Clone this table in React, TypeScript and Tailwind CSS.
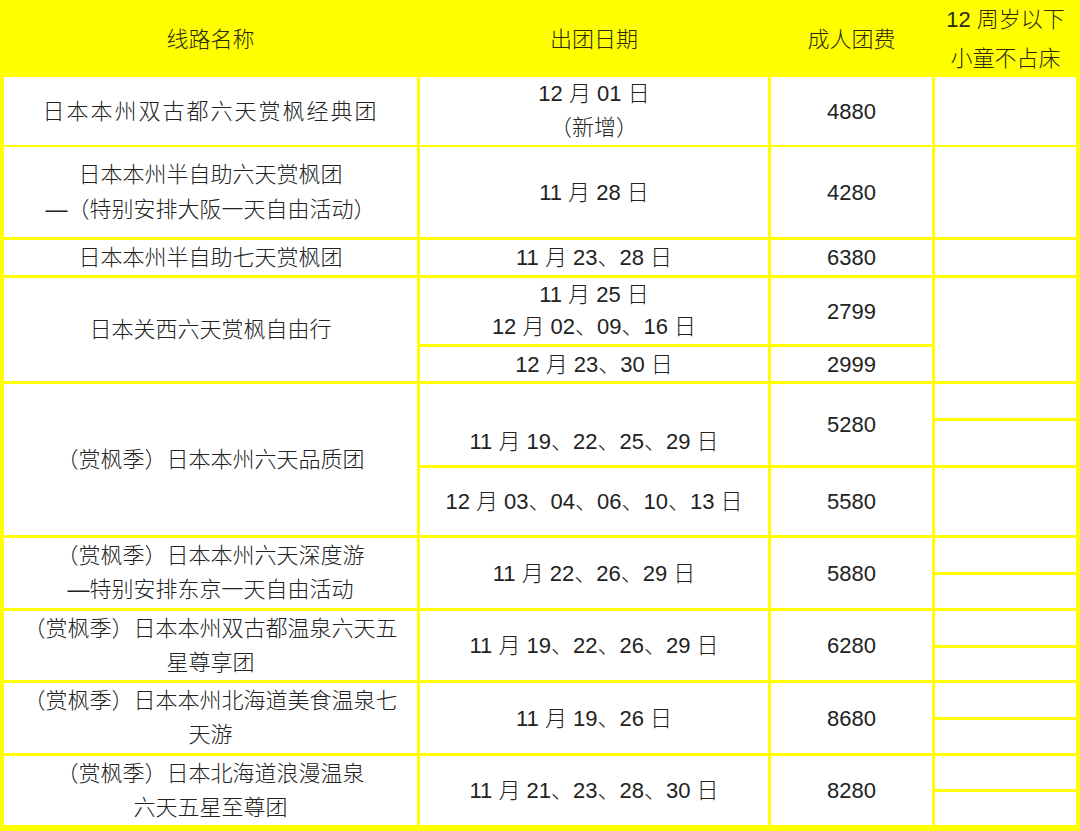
const COLS = 'grid grid-cols-[413px_348px_161px_141px] gap-[3px]'

function Cell({ className = '', children }: { className?: string; children?: React.ReactNode }) {
  return (
    <div className={`bg-white flex flex-col items-center justify-center text-center whitespace-nowrap ${className}`}>
      {children}
    </div>
  )
}

type TourRow = { name: string[]; dates: string; price: string; rows: string }

const SPLIT_ROWS: TourRow[] = [
  { name: ['（赏枫季）日本本州六天深度游', '—特别安排东京一天自由活动'], dates: '11 月 22、26、29 日', price: '5880', rows: 'grid-rows-[34px_33px]' },
  { name: ['（赏枫季）日本本州双古都温泉六天五', '星尊享团'], dates: '11 月 19、22、26、29 日', price: '6280', rows: 'grid-rows-[34px_32px]' },
  { name: ['（赏枫季）日本本州北海道美食温泉七', '天游'], dates: '11 月 19、26 日', price: '8680', rows: 'grid-rows-[34px_33px]' },
  { name: ['（赏枫季）日本北海道浪漫温泉', '六天五星至尊团'], dates: '11 月 21、23、28、30 日', price: '8280', rows: 'grid-rows-[33px_33px]' },
]

export default function App() {
  return (
    <div className="w-[1080px] h-[831px] bg-[#ffff00] px-[4px] text-[22px] font-light text-[#222] font-['Liberation_Sans','Noto_Sans_CJK_SC',sans-serif]">
      {/* Header */}
      <div className={`${COLS} h-[77px] text-[#2b2b10]`}>
        <div className="flex items-center justify-center pt-[1px]">线路名称</div>
        <div className="flex items-center justify-center pt-[1px]">出团日期</div>
        <div className="flex items-center justify-center pt-[1px]">成人团费</div>
        <div className="flex flex-col items-center justify-center leading-[39px]">
          <span>12 周岁以下</span>
          <span>小童不占床</span>
        </div>
      </div>

      <div className="flex flex-col gap-[3px]">
        {/* 经典团 */}
        <div className={`${COLS} h-[67px]`}>
          <Cell className="tracking-[2px]">日本本州双古都六天赏枫经典团</Cell>
          <Cell className="leading-[34px]">
            <span>12 月 01 日</span>
            <span>（新增）</span>
          </Cell>
          <Cell>4880</Cell>
          <Cell />
        </div>

        {/* 半自助六天 */}
        <div className={`${COLS} h-[90px]`}>
          <Cell className="leading-[35px]">
            <span>日本本州半自助六天赏枫团</span>
            <span>—（特别安排大阪一天自由活动）</span>
          </Cell>
          <Cell>11 月 28 日</Cell>
          <Cell>4280</Cell>
          <Cell />
        </div>

        {/* 半自助七天 */}
        <div className={`${COLS} h-[35px]`}>
          <Cell>日本本州半自助七天赏枫团</Cell>
          <Cell>11 月 23、28 日</Cell>
          <Cell>6380</Cell>
          <Cell />
        </div>

        {/* 关西 */}
        <div className={`${COLS} grid-rows-[66px_34px]`}>
          <Cell className="row-span-2">日本关西六天赏枫自由行</Cell>
          <Cell className="leading-[32px]">
            <span>11 月 25 日</span>
            <span>12 月 02、09、16 日</span>
          </Cell>
          <Cell>2799</Cell>
          <Cell className="row-span-2" />
          <Cell>12 月 23、30 日</Cell>
          <Cell>2999</Cell>
        </div>

        {/* 品质团 */}
        <div className={`${COLS} grid-rows-[34px_44px_67px]`}>
          <Cell className="row-span-3">（赏枫季）日本本州六天品质团</Cell>
          <Cell className="row-span-2 pt-[33px]">11 月 19、22、25、29 日</Cell>
          <Cell className="row-span-2">5280</Cell>
          <Cell />
          <Cell />
          <Cell>12 月 03、04、06、10、13 日</Cell>
          <Cell>5580</Cell>
          <Cell />
        </div>

        {SPLIT_ROWS.map(r => (
          <div key={r.price} className={`${COLS} ${r.rows}`}>
            <Cell className="row-span-2 leading-[34px]">
              {r.name.map(line => <span key={line}>{line}</span>)}
            </Cell>
            <Cell className="row-span-2">{r.dates}</Cell>
            <Cell className="row-span-2">{r.price}</Cell>
            <Cell />
            <Cell />
          </div>
        ))}
      </div>
    </div>
  )
}
